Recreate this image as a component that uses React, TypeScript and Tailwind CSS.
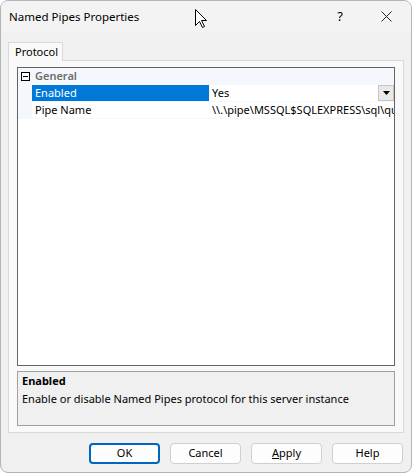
import React from 'react'

const font = { fontFamily: '"Noto Sans", "Open Sans", sans-serif' }

function Cursor() {
  return (
    <svg className="absolute left-[194px] top-[8px]" width="13" height="20" viewBox="0 0 13 20">
      <path d="M0.5 0.5 L0.5 16.5 L4.5 12.5 L7.5 18.5 L9.5 17.5 L6.5 11.5 L11.5 11.5 Z" fill="#fff" stroke="#000" strokeWidth="1" />
    </svg>
  )
}

function Btn({ label, primary, underline }: { label: string; primary?: boolean; underline?: boolean }) {
  return (
    <button
      className={`flex h-[21px] w-[71px] items-center justify-center rounded-[4px] bg-[#fdfdfd] text-[11px] text-black ${
        primary ? 'border-2 border-[#0067c0]' : 'border border-[#d0d0d0]'
      }`}
    >
      {underline ? (
        <span>
          <span className="underline">{label[0]}</span>
          {label.slice(1)}
        </span>
      ) : (
        label
      )}
    </button>
  )
}

export default function App() {
  return (
    <div className="relative flex h-[473px] w-[412px] flex-col overflow-hidden rounded-[8px] border border-[#b4b4b4] bg-[#f0f0f0]" style={font}>
      {/* タイトルバー */}
      <div className="flex h-[31px] items-center bg-[#f3f3f3] pl-[8px] text-[11.5px] text-black">
        <span className="flex-1">Named Pipes Properties</span>
        <span className="mr-[38px] text-[13px]">?</span>
        <svg className="mr-[19px]" width="11" height="11" viewBox="0 0 11 11">
          <path d="M0.5 0.5 L10.5 10.5 M10.5 0.5 L0.5 10.5" stroke="#222" strokeWidth="1" />
        </svg>
      </div>
      <Cursor />

      {/* タブ */}
      <div className="mt-[10px] flex px-[7px]">
        <div className="relative z-10 -mb-px flex h-[19px] w-[55px] items-center border border-b-0 border-[#d9d9d9] bg-[#f9f9f9] pl-[6px] text-[11px] text-black">
          Protocol
        </div>
      </div>
      <div className="mx-[7px] flex h-[373px] flex-col border border-[#d9d9d9] bg-[#f9f9f9] px-[8px] pb-[6px] pt-[6px]">
        {/* プロパティグリッド */}
        <div className="flex h-[300px] flex-col border border-[#646464] bg-white text-[11px]">
          <div className="flex h-[17px] bg-[#f4f7fc]">
            <div className="flex w-[14px] items-center justify-center">
              <div className="flex h-[9px] w-[9px] items-center justify-center border border-black bg-white">
                <div className="h-px w-[5px] bg-black" />
              </div>
            </div>
            <div className="flex items-center pl-[3px] font-semibold text-[#6d6d6d]">General</div>
          </div>
          <div className="flex h-[17px] border-b border-[#f4f7fc]">
            <div className="w-[14px] bg-[#f4f7fc]" />
            <div className="flex w-[178px] items-center border-r border-[#f4f7fc] bg-[#0078d7] pl-[3px] text-white">Enabled</div>
            <div className="flex flex-1 items-center pl-[2px] text-black">Yes</div>
            <div className="flex w-[16px] items-center justify-center border border-[#c4c4c4] bg-[#e9e9e9]">
              <svg width="7" height="4" viewBox="0 0 7 4">
                <path d="M0 0 L7 0 L3.5 4 Z" fill="#000" />
              </svg>
            </div>
          </div>
          <div className="flex h-[17px] border-b border-[#f4f7fc]">
            <div className="w-[14px] bg-[#f4f7fc]" />
            <div className="flex w-[178px] items-center border-r border-[#f4f7fc] pl-[3px] text-black">Pipe Name</div>
            <div className="flex min-w-0 flex-1 items-center overflow-hidden whitespace-nowrap pl-[2px] text-black">
              \\.\pipe\MSSQL$SQLEXPRESS\sql\query
            </div>
          </div>
          <div className="flex-1" />
        </div>

        {/* 説明 */}
        <div className="mt-[5px] h-[55px] border border-[#a0a0a0] bg-[#f0f0f0] px-[4px] pt-[1px] text-[11px] text-black">
          <div className="font-bold">Enabled</div>
          <div className="mt-[1px]">Enable or disable Named Pipes protocol for this server instance</div>
        </div>
      </div>

      {/* ボタン */}
      <div className="mt-[10px] flex justify-end gap-[10px] pr-[8px]">
        <Btn label="OK" primary />
        <Btn label="Cancel" />
        <Btn label="Apply" underline />
        <Btn label="Help" />
      </div>
    </div>
  )
}
